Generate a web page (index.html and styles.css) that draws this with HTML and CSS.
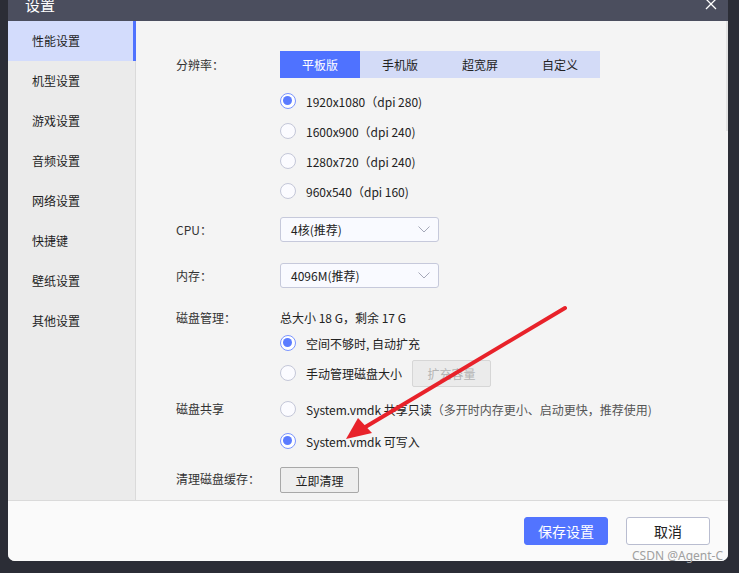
FILE: index.html
```html
<!DOCTYPE html>
<html lang="zh-CN">
<head>
<meta charset="utf-8">
<title>设置</title>
<link rel="stylesheet" href="styles.css">
</head>
<body>
<div class="dialog">
  <div class="titlebar">
    <span class="title">设置</span>
    <svg class="close" width="12" height="12" viewBox="0 0 12 12"><path d="M1 -1 L11 9 M11 -1 L1 9" stroke="#ffffff" stroke-width="1.3" fill="none"/></svg>
  </div>
  <div class="main">
    <nav class="sidebar">
      <div class="nav-item active">性能设置</div>
      <div class="nav-item">机型设置</div>
      <div class="nav-item">游戏设置</div>
      <div class="nav-item">音频设置</div>
      <div class="nav-item">网络设置</div>
      <div class="nav-item">快捷键</div>
      <div class="nav-item">壁纸设置</div>
      <div class="nav-item">其他设置</div>
    </nav>
    <section class="content">
      <div class="field f-res">
        <div class="label tall">分辨率：</div>
        <div class="control">
          <div class="tabs">
            <div class="tab active">平板版</div>
            <div class="tab">手机版</div>
            <div class="tab">超宽屏</div>
            <div class="tab">自定义</div>
          </div>
          <div class="radios">
            <div class="radio-row"><span class="radio checked"></span><span>1920x1080（dpi 280)</span></div>
            <div class="radio-row"><span class="radio"></span><span>1600x900（dpi 240)</span></div>
            <div class="radio-row"><span class="radio"></span><span>1280x720（dpi 240)</span></div>
            <div class="radio-row"><span class="radio"></span><span>960x540（dpi 160)</span></div>
          </div>
        </div>
      </div>
      <div class="field f-cpu">
        <div class="label sel">CPU：</div>
        <div class="control">
          <div class="select"><span>4核(推荐)</span><svg width="12" height="7" viewBox="0 0 12 7"><path d="M0.5 0.5 L6 6 L11.5 0.5" stroke="#a5a8b8" stroke-width="1" fill="none"/></svg></div>
        </div>
      </div>
      <div class="field f-mem">
        <div class="label sel">内存：</div>
        <div class="control">
          <div class="select"><span>4096M(推荐)</span><svg width="12" height="7" viewBox="0 0 12 7"><path d="M0.5 0.5 L6 6 L11.5 0.5" stroke="#a5a8b8" stroke-width="1" fill="none"/></svg></div>
        </div>
      </div>
      <div class="field f-disk">
        <div class="label line">磁盘管理：</div>
        <div class="control">
          <div class="line">总大小 18 G，剩余 17 G</div>
          <div class="radio-row"><span class="radio checked"></span><span>空间不够时, 自动扩充</span></div>
          <div class="radio-row"><span class="radio"></span><span>手动管理磁盘大小</span><button class="btn disabled">扩充容量</button></div>
        </div>
      </div>
      <div class="field f-share">
        <div class="label row32">磁盘共享</div>
        <div class="control">
          <div class="radio-row r32"><span class="radio"></span><span>System.vmdk 共享只读<span class="muted">（多开时内存更小、启动更快，推荐使用)</span></span></div>
          <div class="radio-row r32"><span class="radio checked"></span><span>System.vmdk 可写入</span></div>
        </div>
      </div>
      <div class="field f-clean">
        <div class="label btnh">清理磁盘缓存：</div>
        <div class="control">
          <button class="btn clean">立即清理</button>
        </div>
      </div>
      <div class="scroll-thumb"></div>
    </section>
  </div>
  <div class="footer">
    <button class="fbtn primary">保存设置</button>
    <button class="fbtn">取消</button>
  </div>
  <svg class="arrow" width="739" height="573" viewBox="0 0 739 573">
    <path d="M565 308 L362 429" stroke="#e8222a" stroke-width="4" stroke-linecap="round" fill="none"/>
    <path d="M346 439 L358 418 L372 433 Z" fill="#e8222a"/>
  </svg>
</div>
<div class="watermark">CSDN @Agent-C</div>
</body>
</html>
```

FILE: styles.css
```css
* { box-sizing: border-box; }
html, body {
  margin: 0;
  padding: 0;
  width: 739px;
  height: 573px;
  overflow: hidden;
  background: #2b2d36;
  font-family: "Noto Sans CJK SC", "Noto Sans", sans-serif;
  font-size: 12px;
  color: #222;
}
.dialog {
  width: 720px;
  margin-left: 8px;
  background: #f4f4f4;
  border-radius: 0 0 7px 7px;
  overflow: hidden;
}
.titlebar {
  height: 21px;
  background: #4b4e5e;
  display: flex;
  align-items: flex-end;
  justify-content: space-between;
  overflow: hidden;
  padding: 0 11px 0 17px;
}
.title {
  color: #ffffff;
  font-size: 15px;
  line-height: 16px;
  margin-bottom: 8px;
}
.close {
  align-self: flex-start;
  margin-top: 0;
}
.main {
  display: flex;
  height: 479px;
}
.sidebar {
  width: 128px;
  background: #ebebeb;
  border-right: 1px solid #dadada;
  flex-shrink: 0;
}
.nav-item {
  height: 40px;
  line-height: 40px;
  padding-left: 24px;
  color: #1e1e1e;
}
.nav-item.active {
  background: #d3dcfc;
  border-right: 3px solid #4f72ff;
  margin-right: -1px;
}
.content {
  flex: 1;
  padding: 30px 0 0 40px;
  background: #f4f4f4;
  position: relative;
}
.field {
  display: flex;
}
.label {
  width: 104px;
  flex-shrink: 0;
  color: #333;
}
.label.tall { line-height: 27px; }
.label.sel { line-height: 25px; }
.label.line { line-height: 20px; }
.label.row32 { line-height: 32px; }
.label.btnh { line-height: 24px; }
.control { display: flex; flex-direction: column; }
.tabs { display: flex; }
.tab {
  width: 80px;
  height: 27px;
  line-height: 27px;
  text-align: center;
  background: #d3dbf7;
  color: #222;
}
.tab.active {
  background: #4f72ff;
  color: #fff;
}
.radios { margin-top: 8px; }
.radio-row {
  height: 30px;
  display: flex;
  align-items: center;
  color: #222;
}
.radio-row.r32 { height: 32px; }
.radio {
  width: 16px;
  height: 16px;
  border-radius: 50%;
  border: 1px solid #c4c7d8;
  background: #fbfbff;
  margin-right: 10px;
  flex-shrink: 0;
  position: relative;
}
.radio.checked {
  border: 1.5px solid #7b95ff;
  background: #fff;
}
.radio.checked::after {
  content: "";
  position: absolute;
  left: 2px;
  top: 2px;
  width: 9px;
  height: 9px;
  border-radius: 50%;
  background: #5b7cff;
}
.muted { color: #555; }
.f-cpu { margin-top: 11px; }
.f-mem { margin-top: 21px; }
.f-disk { margin-top: 20px; }
.f-share { margin-top: 5px; }
.f-clean { margin-top: 10px; }
.select {
  width: 159px;
  height: 25px;
  border: 1px solid #c6c9db;
  border-radius: 3px;
  background: #f9faff;
  display: flex;
  align-items: center;
  justify-content: space-between;
  padding: 0 8px 0 10px;
  color: #222;
}
.line { height: 20px; line-height: 20px; }
.btn {
  font-family: inherit;
  font-size: 12px;
  height: 27px;
  width: 79px;
  border-radius: 2px;
  padding: 0;
}
.btn.disabled {
  margin-left: 10px;
  background: #ebebeb;
  border: 1px solid #d6d6d6;
  color: #b4b4b4;
}
.btn.clean {
  height: 26px;
  background: #eeeeee;
  border: 1px solid #a8a8a8;
  color: #222;
}
.scroll-thumb {
  position: absolute;
  right: 0;
  top: 0;
  width: 2px;
  height: 110px;
  background: #e2e2e2;
}
.footer {
  height: 61px;
  border-top: 1px solid #dadada;
  background: #fafafa;
  display: flex;
  justify-content: flex-end;
  align-items: flex-start;
  gap: 18px;
  padding: 16px 18px 0 0;
}
.fbtn {
  width: 84px;
  height: 28px;
  border-radius: 3px;
  font-family: inherit;
  font-size: 14px;
  background: #fff;
  border: 1px solid #b9bdd0;
  color: #222;
  padding: 0;
}
.fbtn.primary {
  background: #5274ff;
  border-color: #5274ff;
  color: #fff;
}
.arrow {
  position: absolute;
  left: 0;
  top: 0;
  pointer-events: none;
}
.watermark {
  position: absolute;
  left: 632px;
  top: 548px;
  font-family: "Noto Sans", sans-serif;
  font-size: 12px;
  color: #a0a0a0;
  line-height: 16px;
  width: 96px;
  overflow: hidden;
  white-space: nowrap;
}
```
